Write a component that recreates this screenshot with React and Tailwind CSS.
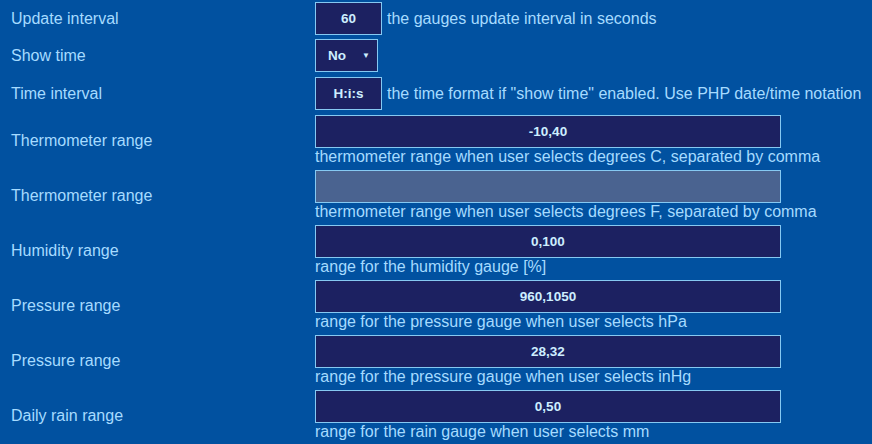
const rows = [
    { label: "Update interval", value: "60", note: "the gauges update interval in seconds", kind: "small" },
    { label: "Show time", value: "No", kind: "select" },
    { label: "Time interval", value: "H:i:s", note: 'the time format if "show time" enabled. Use PHP date/time notation', kind: "small" },
    { label: "Thermometer range", value: "-10,40", note: "thermometer range when user selects degrees C, separated by comma", kind: "wide" },
    { label: "Thermometer range", value: "", note: "thermometer range when user selects degrees F, separated by comma", kind: "wide", disabled: true },
    { label: "Humidity range", value: "0,100", note: "range for the humidity gauge [%]", kind: "wide" },
    { label: "Pressure range", value: "960,1050", note: "range for the pressure gauge when user selects hPa", kind: "wide" },
    { label: "Pressure range", value: "28,32", note: "range for the pressure gauge when user selects inHg", kind: "wide" },
    { label: "Daily rain range", value: "0,50", note: "range for the rain gauge when user selects mm", kind: "wide" },
];

const boxBase =
    "h-[33px] border border-[#86c9f2] flex items-center text-[13.5px] font-bold text-[#cdeeff]";

export default function App() {
    return (
        <div
            className="w-[872px] h-[444px] overflow-hidden bg-[#0151a0] text-[#a6dbff] text-[16px] leading-[18px]"
            style={{ fontFamily: '"Liberation Sans", Arial, sans-serif' }}
        >
            {rows.map((row, i) => (
                <Row key={i} row={row} extra={i === 2} />
            ))}
        </div>
    );
}

const Row = ({ row, extra }) => {
    return (
        <div className={`flex items-center ${extra ? "py-[3px]" : "py-[2px]"}`}>
            <div className="w-[315px] shrink-0 pl-[11px]">{row.label}</div>
            {row.kind === "small" && (
                <div className="flex items-center">
                    <div className={`${boxBase} w-[67px] justify-center bg-[#1c2161]`}>
                        {row.value}
                    </div>
                    <span className="ml-[5px] whitespace-nowrap">{row.note}</span>
                </div>
            )}
            {row.kind === "select" && (
                <div className={`${boxBase} w-[63px] bg-[#1c2161] pl-[12px] pr-[7px] justify-between`}>
                    <span>No</span>
                    <span className="text-[8px] leading-none">▼</span>
                </div>
            )}
            {row.kind === "wide" && (
                <div className="flex flex-col">
                    <div
                        className={`${boxBase} w-[466px] justify-center ${
                            row.disabled ? "bg-[#4a6390]" : "bg-[#1c2161]"
                        }`}
                    >
                        {row.value}
                    </div>
                    <span className="whitespace-nowrap">{row.note}</span>
                </div>
            )}
        </div>
    );
};
